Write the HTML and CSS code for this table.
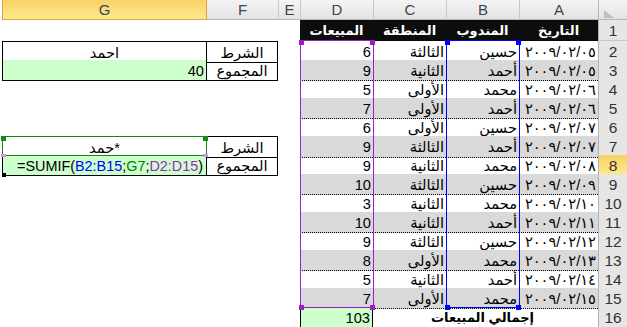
FILE: index.html
```html
<!DOCTYPE html>
<html lang="ar" dir="rtl">
<head>
<meta charset="utf-8">
<title>SUMIF</title>
<link rel="stylesheet" href="styles.css">
</head>
<body>
<div class="sheet">
  <div class="row hdr">
    <div class="corner"><span class="tri"></span></div>
    <div class="ch">A</div>
    <div class="ch">B</div>
    <div class="ch">C</div>
    <div class="ch">D</div>
    <div class="ch">E</div>
    <div class="ch fsel">F</div>
    <div class="ch sel">G</div>
  </div>
  <div class="row r1">
    <div class="rh">1</div>
    <div class="c t th">التاريخ</div>
    <div class="c t th">المندوب</div>
    <div class="c t th">المنطقة</div>
    <div class="c t th">المبيعات</div>
    <div class="c"></div><div class="c"></div><div class="c"></div>
  </div>
  <div class="row">
    <div class="rh">2</div>
    <div class="c t">٢٠٠٩/٠٢/٠٥</div>
    <div class="c t">حسين</div>
    <div class="c t">الثالثة</div>
    <div class="c t">6</div>
    <div class="c"></div>
    <div class="c ctr bx bt bl br">الشرط</div>
    <div class="c ctr bx bt bl">احمد</div>
  </div>
  <div class="row">
    <div class="rh">3</div>
    <div class="c t g">٢٠٠٩/٠٢/٠٥</div>
    <div class="c t g">أحمد</div>
    <div class="c t g">الثانية</div>
    <div class="c t g">9</div>
    <div class="c"></div>
    <div class="c ctr bx bl br">المجموع</div>
    <div class="c bx bl grn">40</div>
  </div>
  <div class="row">
    <div class="rh">4</div>
    <div class="c t">٢٠٠٩/٠٢/٠٦</div>
    <div class="c t">محمد</div>
    <div class="c t">الأولى</div>
    <div class="c t">5</div>
    <div class="c"></div><div class="c"></div><div class="c"></div>
  </div>
  <div class="row">
    <div class="rh">5</div>
    <div class="c t g">٢٠٠٩/٠٢/٠٦</div>
    <div class="c t g">أحمد</div>
    <div class="c t g">الأولى</div>
    <div class="c t g">7</div>
    <div class="c"></div><div class="c"></div><div class="c"></div>
  </div>
  <div class="row">
    <div class="rh">6</div>
    <div class="c t">٢٠٠٩/٠٢/٠٧</div>
    <div class="c t">حسين</div>
    <div class="c t">الأولى</div>
    <div class="c t">6</div>
    <div class="c"></div><div class="c"></div><div class="c"></div>
  </div>
  <div class="row">
    <div class="rh">7</div>
    <div class="c t g">٢٠٠٩/٠٢/٠٧</div>
    <div class="c t g">أحمد</div>
    <div class="c t g">الثالثة</div>
    <div class="c t g">9</div>
    <div class="c"></div>
    <div class="c ctr bx bt bl br">الشرط</div>
    <div class="c ctr bx bt bl">*حمد</div>
  </div>
  <div class="row">
    <div class="rh sel">8</div>
    <div class="c t">٢٠٠٩/٠٢/٠٨</div>
    <div class="c t">محمد</div>
    <div class="c t">الثانية</div>
    <div class="c t">9</div>
    <div class="c"></div>
    <div class="c ctr bx bl br">المجموع</div>
    <div class="c bx bl grn fxcell"><span class="fx">=SUMIF(<span class="rb">B2:B15</span>;<span class="rg">G7</span>;<span class="rp">D2:D15</span>)</span></div>
  </div>
  <div class="row">
    <div class="rh">9</div>
    <div class="c t g">٢٠٠٩/٠٢/٠٩</div>
    <div class="c t g">حسين</div>
    <div class="c t g">الثالثة</div>
    <div class="c t g">10</div>
    <div class="c"></div><div class="c"></div><div class="c"></div>
  </div>
  <div class="row">
    <div class="rh">10</div>
    <div class="c t">٢٠٠٩/٠٢/١٠</div>
    <div class="c t">محمد</div>
    <div class="c t">الثانية</div>
    <div class="c t">3</div>
    <div class="c"></div><div class="c"></div><div class="c"></div>
  </div>
  <div class="row">
    <div class="rh">11</div>
    <div class="c t g">٢٠٠٩/٠٢/١١</div>
    <div class="c t g">أحمد</div>
    <div class="c t g">الثانية</div>
    <div class="c t g">10</div>
    <div class="c"></div><div class="c"></div><div class="c"></div>
  </div>
  <div class="row">
    <div class="rh">12</div>
    <div class="c t">٢٠٠٩/٠٢/١٢</div>
    <div class="c t">حسين</div>
    <div class="c t">الثالثة</div>
    <div class="c t">9</div>
    <div class="c"></div><div class="c"></div><div class="c"></div>
  </div>
  <div class="row">
    <div class="rh">13</div>
    <div class="c t g">٢٠٠٩/٠٢/١٣</div>
    <div class="c t g">محمد</div>
    <div class="c t g">الأولى</div>
    <div class="c t g">8</div>
    <div class="c"></div><div class="c"></div><div class="c"></div>
  </div>
  <div class="row">
    <div class="rh">14</div>
    <div class="c t">٢٠٠٩/٠٢/١٤</div>
    <div class="c t">أحمد</div>
    <div class="c t">الثانية</div>
    <div class="c t">5</div>
    <div class="c"></div><div class="c"></div><div class="c"></div>
  </div>
  <div class="row">
    <div class="rh">15</div>
    <div class="c t g">٢٠٠٩/٠٢/١٥</div>
    <div class="c t g">محمد</div>
    <div class="c t g">الأولى</div>
    <div class="c t g">7</div>
    <div class="c"></div><div class="c"></div><div class="c"></div>
  </div>
  <div class="row r16">
    <div class="rh">16</div>
    <div class="c"></div>
    <div class="c ctr bold">إجمالي المبيعات</div>
    <div class="c"></div>
    <div class="c grn bl br">103</div>
    <div class="c"></div><div class="c"></div><div class="c"></div>
  </div>

  <div class="rng blue"><i class="h tl"></i><i class="h tr"></i><i class="h bl2"></i><i class="h br2"></i></div>
  <div class="rng purple"><i class="h tl"></i><i class="h tr"></i><i class="h bl2"></i><i class="h br2"></i></div>
  <div class="rng green"><i class="h tl"></i><i class="h tr"></i><i class="h bl2 pink"></i><i class="h br2 pink"></i></div>
  <i class="fill"></i>
</div>
</body>
</html>
```

FILE: styles.css
```css
* { box-sizing: border-box; margin: 0; padding: 0; }
html, body { width: 627px; height: 327px; overflow: hidden; background: #fff; }
body {
  font-family: "Liberation Sans", "DejaVu Sans", sans-serif;
  font-size: 14.67px;
  color: #000;
}
.sheet { position: relative; width: 627px; height: 327px; direction: rtl; }

.row {
  display: grid;
  grid-template-columns: 29px 79px 73px 73px 73px 22px 72px 204px;
  height: 19px;
}
.hdr { height: 20px; }
.r1 { height: 21px; }
.r16 { height: 21px; }

/* column headers */
.corner {
  position: relative;
  background: linear-gradient(#f4f4f4, #e3e3e3);
  border-left: 1px solid #b9b9b9;
  border-bottom: 1px solid #b6b6b6;
}
.tri {
  position: absolute;
  left: 5px;
  top: 10px;
  width: 0;
  height: 0;
  border-bottom: 8px solid #bfbfbf;
  border-right: 10px solid transparent;
}
.ch {
  display: flex;
  align-items: center;
  justify-content: center;
  background: linear-gradient(#f4f4f4, #e3e3e3);
  border-left: 1px solid #c8c8c8;
  border-bottom: 1px solid #b6b6b6;
  font-size: 15px;
  color: #3d4650;
}
.ch.fsel { border-left-color: #e2a43c; }
.ch.sel {
  background: linear-gradient(#f8d266, #fde98e);
  border-left-color: #e2a43c;
  border-bottom-color: #e2a43c;
}

/* row headers */
.rh {
  display: flex;
  justify-content: center;
  padding-top: 2px;
  line-height: 17px;
  background: #e6e6e6;
  border-left: 1px solid #b3b3b3;
  border-bottom: 1px solid #c6c6c6;
  color: #333;
  font-size: 15.5px;
}
.rh.sel {
  background: linear-gradient(#f8d266, #fde98e);
  border-bottom-color: #e2a43c;
}

/* cells */
.c {
  display: flex;
  justify-content: flex-start;
  white-space: nowrap;
  padding: 3px 2px 0;
  line-height: 17px;
}
.t { border-bottom: 1px dotted #000; }
.g { background: #d9d9d9; }
.th {
  background: #0d0d0d;
  color: #fff;
  font-weight: bold;
  font-size: 13px;
  justify-content: center;
  padding-top: 2px;
}
.ctr { justify-content: center; }
.bold { font-weight: bold; font-size: 13px; padding-top: 2px; }
.grn { background: #ccffcc; }
.bx { border-bottom: 1px solid #000; }
.bt { border-top: 1px solid #000; }
.bl { border-left: 1px solid #000; }
.br { border-right: 1px solid #000; }

.fxcell { padding-right: 3px; }
.fx { direction: ltr; unicode-bidi: isolate; font-size: 14.4px; }
.rb { color: #0000ff; }
.rg { color: #008000; }
.rp { color: #9b1fc8; }

/* range highlight overlays */
.rng { position: absolute; border: 1px solid; }
.blue { left: 446px; top: 40px; width: 74px; height: 268px; border-color: #0000ff; }
.purple { left: 300px; top: 40px; width: 74px; height: 268px; border-color: #9b1fc8; }
.green { left: 2px; top: 136px; width: 205px; height: 20px; border-color: #108a10; }
.h { position: absolute; width: 5px; height: 5px; }
.blue .h { background: #0000ff; }
.purple .h { background: #9b1fc8; }
.green .h { background: #108a10; }
.green .h.pink { background: #e68ae6; height: 3px; }
.tl { left: -2px; top: -1px; }
.tr { right: -2px; top: -1px; }
.bl2 { left: -2px; bottom: -3px; }
.br2 { right: -2px; bottom: -3px; }
.green .bl2, .green .br2 { bottom: -2px; }
.fill {
  position: absolute;
  left: 2px;
  top: 173px;
  width: 4px;
  height: 4px;
  background: #000;
}
```
